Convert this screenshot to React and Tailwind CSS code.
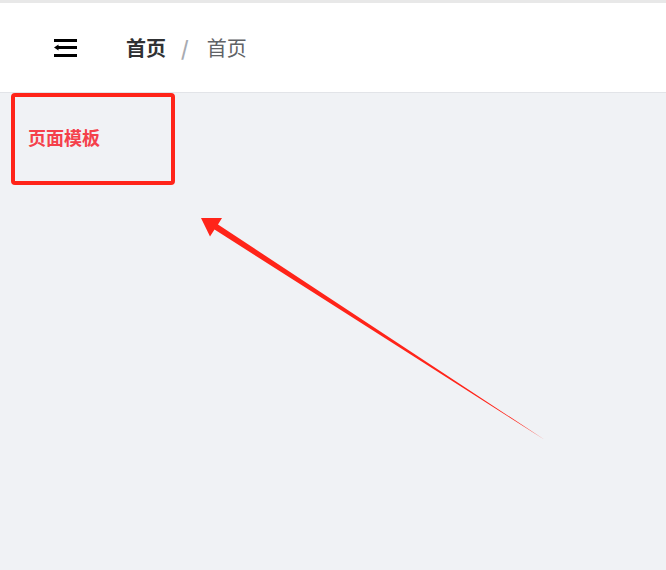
export default function App() {
  return (
    <div
      className="relative w-[666px] h-[570px] overflow-hidden bg-[#f0f2f5] flex flex-col"
      style={{ fontFamily: '"Noto Sans CJK SC", "Noto Sans", sans-serif' }}
    >
      <div className="h-[3px] bg-[#e8e8e8] shrink-0" />
      <div className="h-[90px] shrink-0 bg-white border-b border-[#e2e4e8] flex items-center">
        <div className="ml-[54px] w-[24px] h-[20px] flex items-center">
          <svg width="24" height="20" viewBox="0 0 24 20">
            <rect x="0" y="1" width="23" height="3" fill="#000" />
            <rect x="4" y="8" width="19" height="3" fill="#000" />
            <polygon points="0,9.5 4.5,6.5 4.5,12.5" fill="#000" />
            <rect x="0" y="16" width="23" height="3" fill="#000" />
          </svg>
        </div>
        <div className="ml-[48px] flex items-center text-[20px] leading-none">
          <span className="font-bold text-[#303133]">首页</span>
          <span className="ml-[15px] mr-[18px] font-bold text-[#a8abb2]">/</span>
          <span className="text-[#606266]">首页</span>
        </div>
      </div>
      <div className="flex-1 pl-[11px]">
        <div className="w-[164px] h-[92px] border-4 border-[#ff2419] rounded-[4px] pl-[13px] pt-[29px]">
          <span className="block text-[18px] font-bold text-[#f5404b] leading-[22px]">页面模板</span>
        </div>
      </div>
      <svg className="absolute left-0 top-0 pointer-events-none" width="666" height="570">
        <polygon
          points="201,218 222,218 218,224.5 545,440 214.5,229.5 210,236.5"
          fill="#ff2419"
        />
      </svg>
    </div>
  );
}
